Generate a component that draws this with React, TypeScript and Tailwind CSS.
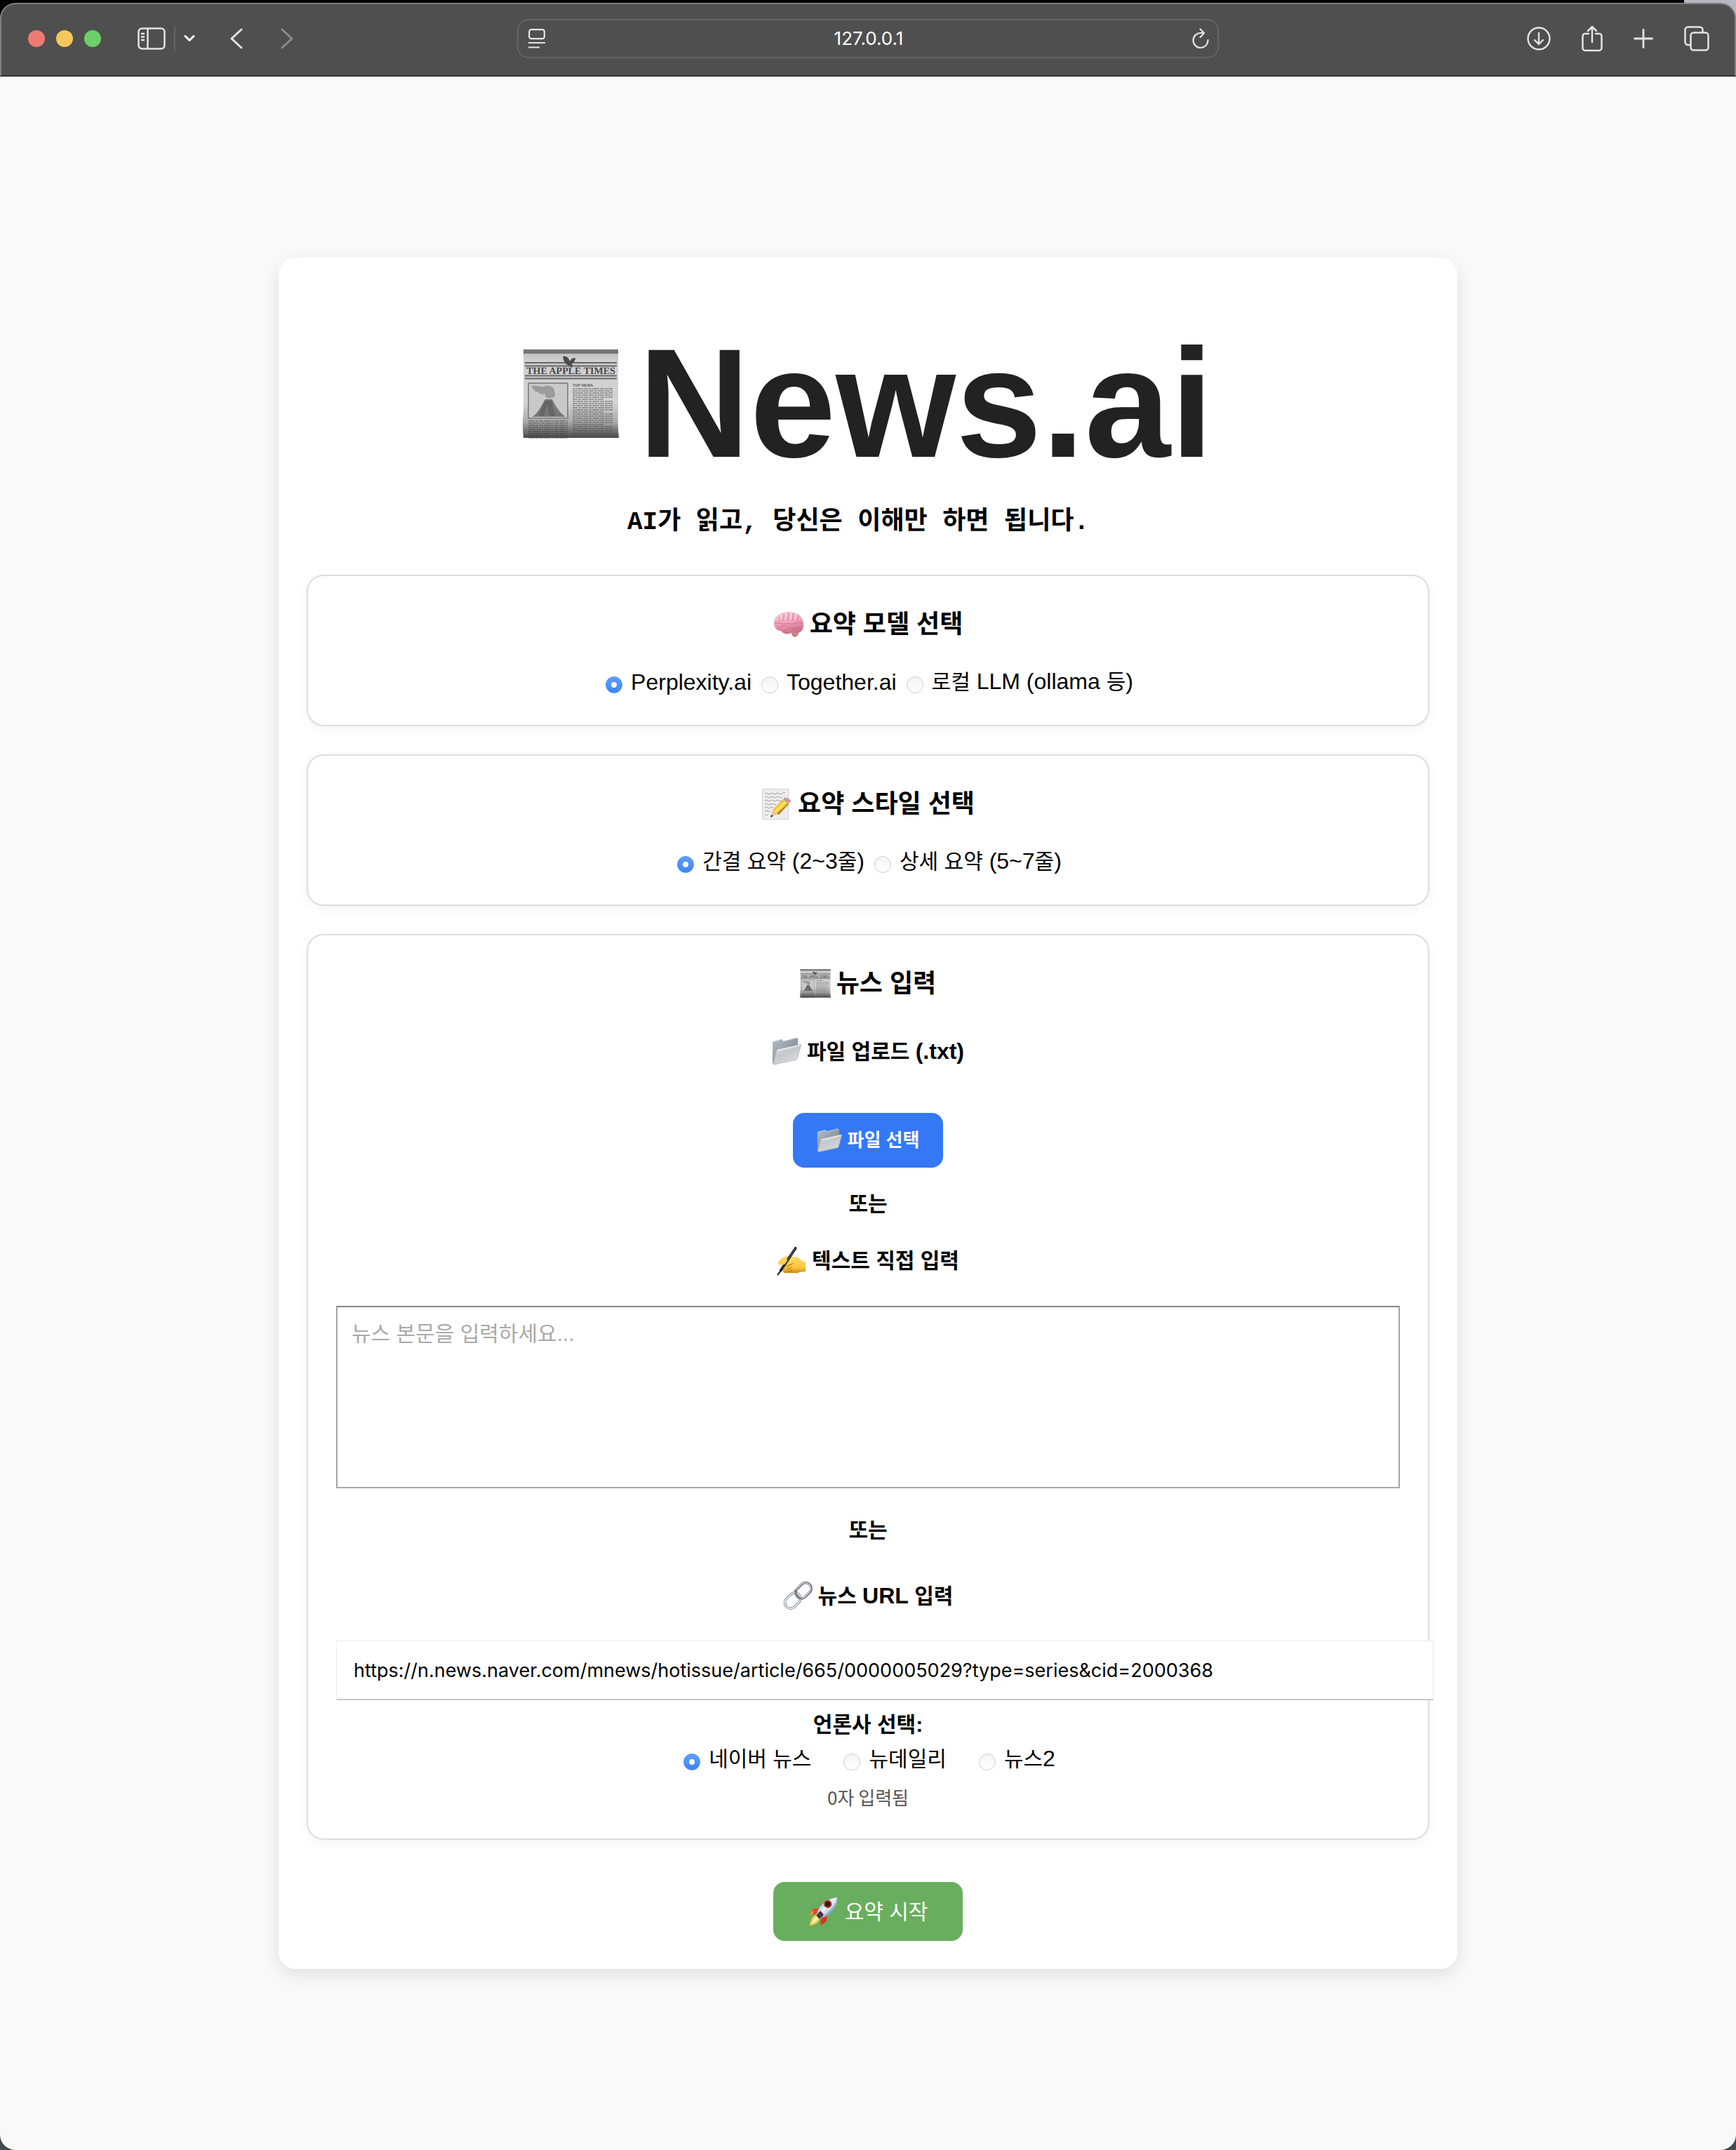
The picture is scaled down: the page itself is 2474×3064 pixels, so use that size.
import { useId, type ReactNode } from "react";

type ArtProps = { className: string };

function Newspaper({ className }: ArtProps) {
  const id = useId();
  const column = Array.from({ length: 23 }, (_, i) => i);
  return (
    <svg viewBox="0 0 137 128" className={className} aria-hidden="true">
      <defs>
        <linearGradient id={id} x1="0" y1="0" x2="0" y2="1">
          <stop offset="0" stopColor="#b8b8b8" />
          <stop offset="0.12" stopColor="#cfcfcf" />
          <stop offset="0.6" stopColor="#d4d4d4" />
          <stop offset="0.82" stopColor="#a9a9a9" />
          <stop offset="1" stopColor="#484848" />
        </linearGradient>
      </defs>
      <path d="M1 1h135v88q-1 20 1 38H1q-2-18 0-38z" fill={`url(#${id})`} />
      <path d="M1 1h135v6H1z" fill="#747474" />
      <path d="M3 20h131M3 24.500h131M3 38.500h131M3 42.500h131" stroke="#666" strokeWidth="2" />
      <path d="M57 11c5-1 8 1 10 7 2-4 5-6 9-4-2 1-2 3-3 5l-3 2 1 6-3-2-6-3c-4-4-4-8-5-11z" fill="#4a4a4a" />
      <text x="68.500" y="36" textAnchor="middle" fontSize="14" fontWeight="700" fill="#484848" fontFamily="Liberation Serif, serif" textRendering="geometricPrecision">
        THE APPLE TIMES
      </text>
      <rect x="8" y="49" width="56" height="50" fill="#c9c9c9" stroke="#777" strokeWidth="1.500" />
      <path d="M12 54c8-4 14 3 20-1 8-2 14 3 13 9 3 5-1 9-6 8-5 2-8-2-7-6-7 3-9-3-14-3z" fill="#9b9b9b" />
      <path d="M13 97c8-3 14-17 19-25h10c4 9 11 20 19 25z" fill="#777" />
      <path d="M31 74l-8 22h7l5-16 3 16h8l-5-22z" fill="#5c5c5c" opacity="0.600" />
      <text x="71" y="54" fontSize="5.500" fontWeight="700" fill="#555" fontFamily="Liberation Sans, sans-serif" textRendering="geometricPrecision">
        TOP NEWS
      </text>
      {column.map((i) => (
        <path key={i} d={`M71 ${57 + i * 3}h${i % 6 === 5 ? 44 : 57}`} stroke="#555" strokeWidth="1.300" strokeDasharray={i % 2 ? "7 1 4 1 9 1" : "4 1 10 1 6 1"} opacity="0.600" />
      ))}
      {column.slice(0, 9).map((i) => (
        <path key={i} d={`M8 ${103 + i * 3}h56`} stroke="#444" strokeWidth="1.300" strokeDasharray={i % 2 ? "5 1 8 1 3 1" : "9 1 4 1 6 1"} opacity="0.600" />
      ))}
    </svg>
  );
}

function Brain({ className }: ArtProps) {
  const id = useId();
  return (
    <svg viewBox="0 0 44 44" className={className} fill="none" aria-hidden="true">
      <defs>
        <linearGradient id={id} x1="0" y1="0" x2="0.300" y2="1">
          <stop offset="0" stopColor="#fbd3dd" />
          <stop offset="0.550" stopColor="#f0a3b8" />
          <stop offset="1" stopColor="#d0708e" />
        </linearGradient>
      </defs>
      <path d="M25 32c1 4 2 7 5 8 4 0 6-3 6-7l-3-4z" fill="#c98487" />
      <path d="M1 22C0 11 9 4 22 4c12 0 20 6 21 16 1 8-3 14-9 14-3 0-5-2-7-1-5 4-13 3-16-2-5 0-9-3-10-9z" fill={`url(#${id})`} />
      <path
        d="M8 11c3 2 1 6-1 9m7-13c3 3 0 6-1 10m8-12c3 3-1 7 0 11m7-10c2 3-2 6 0 10m7-7c2 3-2 4 0 8M2 20c6-1 8 2 14 1s10 1 14 0 8-3 12-1M10 29c0-5 3-6 7-5m-4 7c5 1 7-5 12-4s10 0 15-2m-13 6c-1-3 3-5 7-4M6 23c2 1 2 3 1 5"
        stroke="#c9688a"
        strokeWidth="1"
        strokeLinecap="round"
        opacity="0.800"
      />
      <path d="M11 8c2 2 0 5-1 7m8-9c2 3 0 6-1 9m8-9c2 3 0 6-1 9m8-7c1 2 0 5-1 7" stroke="#fff" strokeWidth="1.200" opacity="0.600" />
    </svg>
  );
}

function Memo({ className }: ArtProps) {
  return (
    <svg viewBox="0 0 44 44" className={className} fill="none" aria-hidden="true">
      <path d="M1.500 .5h37v43h-37z" fill="#ededed" stroke="#d2d2d2" />
      <path
        d="M5 7q2-2 4 0t4 0 4 0 4 0 4 0 4 0 5-1M5 12q2-2 4 0t4 0 4 0 4 0 4 0 5 0M5 17q2-2 4 0t4 0 4 0 4 0 4 0 4 0M5 22q2-2 4 0t4 0 4 0 4 0M5 27q2-2 4 0t4 0 4 0M5 32q2-2 4 0t4 0M5 38q2-2 4 0"
        stroke="#a0a0a0"
        strokeWidth="1"
      />
      <path d="M13 41l3-11 7 6z" fill="#e8c79a" />
      <path d="M13 41l1-4 3 2z" fill="#333" />
      <path d="M16 30L31 15l7 6-15 15z" fill="#f5c431" />
      <path d="M19 32L34 17l2 2-15 15z" fill="#fbe27a" />
      <path d="M22 36l16-15 1 1-14 15z" fill="#a97d12" />
      <path d="M31 15l2-2 7 6-2 2z" fill="#9aa3ad" />
      <path d="M33 13c3-1 8 2 9 4 0 2-1 3-2 3z" fill="#ef8d94" />
    </svg>
  );
}

function Folder({ className }: ArtProps) {
  const id = useId();
  return (
    <svg viewBox="0 0 44 42" className={className} fill="none" aria-hidden="true">
      <defs>
        <linearGradient id={`${id}b`} x1="0" y1="0" x2="1" y2="1">
          <stop offset="0" stopColor="#b6bec6" />
          <stop offset="1" stopColor="#6f7c88" />
        </linearGradient>
        <linearGradient id={`${id}f`} x1="0" y1="0" x2="0.600" y2="1">
          <stop offset="0" stopColor="#e3e5e8" />
          <stop offset="0.500" stopColor="#c4c7cb" />
          <stop offset="1" stopColor="#d9dbde" />
        </linearGradient>
      </defs>
      <path d="M1 7L15 3l2 3 20-5c1 0 2 1 2 2v26L3 41 1 39z" fill={`url(#${id}b)`} />
      <path d="M1 7L15 3l2 3 20-5" stroke="#d7dce1" />
      <path d="M7 20c0-1 1-2 2-2l33-7c1 0 2 0 1.500 1.500L38 32c0 1-1 2-2 2L4 41c-1 0-2-1-2-2z" fill={`url(#${id}f)`} stroke="#a6abb0" strokeWidth="0.700" />
      <path d="M8 20L42 12" stroke="#fff" strokeWidth="1" />
    </svg>
  );
}

function WritingHand({ className }: ArtProps) {
  const id = useId();
  return (
    <svg viewBox="0 0 44 44" className={className} fill="none" aria-hidden="true">
      <defs>
        <linearGradient id={id} x1="0" y1="0" x2="0" y2="1">
          <stop offset="0" stopColor="#ffdf6b" />
          <stop offset="0.700" stopColor="#fbc53b" />
          <stop offset="1" stopColor="#c98a17" />
        </linearGradient>
      </defs>
      <path d="M3 22c3-4 7-6 11-7 3-2 6-1 6 1l9 0c3 0 6 3 9 6l5 2v14c-5 0-8 0-12 2H13c-4 0-5-4-3-6-4-1-4-5 0-7L4 28c-2-1-3-4-1-6z" fill={`url(#${id})`} />
      <path d="M15 30l9-4m-9 8l7-2m-5 6l6-2M20 17l-8 8" stroke="#b9770f" strokeWidth="1.200" strokeLinecap="round" />
      <path d="M28 3L6 36" stroke="#2b2b2b" strokeWidth="4" strokeLinecap="round" />
      <path d="M8 34l-7 9" stroke="#111" strokeWidth="2" />
      <path d="M28 3L12 27" stroke="#777" strokeWidth="0.800" />
      <path d="M6 23c2-3 6-5 9-4 2 2-1 5-5 9" fill="#fdd154" />
    </svg>
  );
}

function Chain({ className }: ArtProps) {
  return (
    <svg viewBox="0 0 44 44" className={className} fill="none" aria-hidden="true">
      <g transform="rotate(-45 30 14)">
        <rect x="17" y="6" width="26" height="17" rx="8.500" stroke="#6f6a70" strokeWidth="3.800" />
        <rect x="16.500" y="5.500" width="26" height="17" rx="8.500" stroke="#cfd9e6" strokeWidth="1.600" />
      </g>
      <g transform="rotate(-45 14 29)">
        <rect x="1" y="21" width="26" height="17" rx="8.500" stroke="#7d8794" strokeWidth="3.800" />
        <rect x="1" y="21" width="26" height="17" rx="8.500" stroke="#f0f4f9" strokeWidth="1.800" />
      </g>
      <path d="M18 13c0 5 2 10 9 14" stroke="#77717a" strokeWidth="2.600" />
    </svg>
  );
}

function Rocket({ className }: ArtProps) {
  const id = useId();
  return (
    <svg viewBox="0 0 44 44" className={className} fill="none" aria-hidden="true">
      <defs>
        <linearGradient id={id} x1="0.200" y1="0.200" x2="0.800" y2="0.800">
          <stop offset="0" stopColor="#8fb4e6" />
          <stop offset="0.450" stopColor="#eef2f5" />
          <stop offset="1" stopColor="#4c78b8" />
        </linearGradient>
      </defs>
      <path d="M17 17L7 18 1 27l11-1z" fill="#e8452c" />
      <path d="M7 20l-6 7 6-1z" fill="#f9a13a" />
      <path d="M28 28l-1 9-9 6 1-12z" fill="#d9331f" />
      <path d="M11 27c-6 3-8 9-9 16 7-1 12-3 15-9z" fill="#f5d24f" />
      <path d="M12 30c-4 2-5 6-7 10 4-1 7-3 9-7z" fill="#fff3b0" />
      <path d="M12 28c2-12 13-25 31-27 0 17-11 28-26 32z" fill={`url(#${id})`} />
      <path d="M12 28l5 5 6-6-5-6z" fill="#5a2027" />
      <path d="M14 24l7 7" stroke="#39567f" strokeWidth="2" />
      <circle cx="29" cy="11" r="5" fill="#222" stroke="#c9342c" strokeWidth="2" />
      <path d="M22 26c8-4 14-11 18-20" stroke="#fff" strokeWidth="1.500" opacity="0.600" />
    </svg>
  );
}

function Ko({ children }: { children: ReactNode }) {
  return <span className="text-[30px]">{children}</span>;
}

function Latin({ children }: { children: ReactNode }) {
  return <span className="text-[32px]">{children}</span>;
}

function Radio({ name, children, defaultChecked }: { name: string; children: ReactNode; defaultChecked?: boolean }) {
  return (
    <label className="flex items-center gap-3 whitespace-nowrap text-[32px] leading-10">
      <input
        type="radio"
        name={name}
        defaultChecked={defaultChecked}
        className="mt-2 flex size-6 shrink-0 appearance-none items-center justify-center rounded-full border border-[#cfcfcf] bg-linear-to-b from-[#f4f4f4] to-white before:size-2 before:rounded-full checked:border-[#4a90f8] checked:from-[#5e9ffb] checked:to-[#3c85f7] checked:before:bg-white"
      />
      <span>{children}</span>
    </label>
  );
}

function Section({ icon, title, children }: { icon: ReactNode; title: string; children: ReactNode }) {
  return (
    <section className="flex w-full flex-col items-center rounded-[24px] border-2 border-[#ddd] px-10 pt-[47px] pb-[41px] shadow-[0_4px_16px_rgba(0,0,0,0.05)]">
      <h2 className="flex items-center gap-2 text-[36px] leading-[44px] font-bold">
        {icon}
        {title}
      </h2>
      {children}
    </section>
  );
}

const toolButton = "flex items-center justify-center text-[#e4e4e4]";

function Toolbar() {
  return (
    <header className="bg-[linear-gradient(to_right,#000_97%,#b5b8c0_97%)] pt-1">
      <div className="grid h-[104px] grid-cols-[1fr_minmax(0,1000px)_1fr] items-center rounded-t-[22px] border-x-2 border-t-2 border-[#808080] bg-[#4f4f4f] pb-1">
        <div className="flex items-center pl-[38px]">
          <div className="flex gap-4">
            <button aria-label="Close" className="size-6 rounded-full bg-[#ee7b72]" />
            <button aria-label="Minimize" className="size-6 rounded-full bg-[#f5c75d]" />
            <button aria-label="Zoom" className="size-6 rounded-full bg-[#6dcf68]" />
          </div>
          <button aria-label="Sidebar" className={`${toolButton} ml-[52px]`}>
            <svg viewBox="0 0 40 32" className="h-8 w-10" fill="none" stroke="currentColor" strokeWidth="2.500">
              <rect x="1.500" y="1.500" width="37" height="29" rx="5" />
              <path d="M14.500 2v28M5 9h5M5 13.500h5M5 18h5" />
            </svg>
          </button>
          <div className="ml-3 h-9 w-0.5 bg-[#646464]" />
          <button aria-label="Sidebar menu" className="ml-3 flex text-white">
            <svg viewBox="0 0 16 12" className="h-3 w-4" fill="none" stroke="currentColor" strokeWidth="3" strokeLinecap="round" strokeLinejoin="round">
              <path d="M2 2.500l6 6 6-6" />
            </svg>
          </button>
          <button aria-label="Back" className={`${toolButton} ml-[50px]`}>
            <svg viewBox="0 0 18 30" className="h-[30px] w-[18px]" fill="none" stroke="currentColor" strokeWidth="3" strokeLinecap="round" strokeLinejoin="round">
              <path d="M16 2L2 15l14 13" />
            </svg>
          </button>
          <button aria-label="Forward" className="ml-[54px] flex text-[#8c8c8c]">
            <svg viewBox="0 0 18 30" className="h-[30px] w-[18px]" fill="none" stroke="currentColor" strokeWidth="3" strokeLinecap="round" strokeLinejoin="round">
              <path d="M2 2l14 13L2 28" />
            </svg>
          </button>
        </div>
        <div className="flex h-14 items-center rounded-[16px] border-2 border-[#646464] pr-3 pl-3.5">
          <button aria-label="Reader" className={toolButton}>
            <svg viewBox="0 0 24 28" className="h-7 w-6" fill="none" stroke="currentColor" strokeWidth="2.200">
              <rect x="1.200" y="1.200" width="21.600" height="13" rx="3" />
              <path d="M0 20h24M0 26.500h16" />
            </svg>
          </button>
          <input
            aria-label="Address"
            defaultValue="127.0.0.1"
            className="min-w-0 flex-1 bg-transparent text-center font-['Inter','Noto_Sans_CJK_KR',sans-serif] text-[26px] leading-8 text-white outline-none"
          />
          <button aria-label="Reload" className={toolButton}>
            <svg viewBox="0 0 24 30" className="h-[30px] w-6" fill="none" stroke="currentColor" strokeWidth="2.200" strokeLinecap="round" strokeLinejoin="round">
              <path d="M22.500 17A10.500 10.500 0 1 1 12 7h5M11.500 1.500L17 7l-5.500 6" />
            </svg>
          </button>
        </div>
        <div className="flex items-center justify-end gap-11 pr-9">
          <button aria-label="Downloads" className={toolButton}>
            <svg viewBox="0 0 34 34" className="size-[34px]" fill="none" stroke="currentColor" strokeWidth="2.400" strokeLinecap="round" strokeLinejoin="round">
              <circle cx="17" cy="17" r="15.500" />
              <path d="M17 9v16M11 19l6 6 6-6" />
            </svg>
          </button>
          <button aria-label="Share" className={toolButton}>
            <svg viewBox="0 0 30 38" className="h-[38px] w-[30px]" fill="none" stroke="currentColor" strokeWidth="2.500" strokeLinecap="round" strokeLinejoin="round">
              <path d="M10 12H5a3.500 3.500 0 0 0-3.500 3.500v17A3.500 3.500 0 0 0 5 36h20a3.500 3.500 0 0 0 3.500-3.500v-17A3.500 3.500 0 0 0 25 12h-5M15 24V2M9 8l6-6 6 6" />
            </svg>
          </button>
          <button aria-label="New tab" className={toolButton}>
            <svg viewBox="0 0 28 28" className="size-7" fill="none" stroke="currentColor" strokeWidth="2.800" strokeLinecap="round">
              <path d="M14 1.500v25M1.500 14h25" />
            </svg>
          </button>
          <button aria-label="Tab overview" className={toolButton}>
            <svg viewBox="0 0 36 36" className="size-9" fill="none" stroke="currentColor" strokeWidth="2.500" strokeLinejoin="round">
              <rect x="9.500" y="9.500" width="25" height="25" rx="4" />
              <path d="M9.500 27H5.500a4 4 0 0 1-4-4V5.500a4 4 0 0 1 4-4h17a4 4 0 0 1 4 4v4" />
            </svg>
          </button>
        </div>
      </div>
    </header>
  );
}

export default function App() {
  return (
    <div className="flex min-h-screen flex-col bg-[#3f4b52] font-['Liberation_Sans','Noto_Sans_CJK_KR',sans-serif] text-black">
      <Toolbar />
      <main className="flex flex-1 items-center justify-center rounded-b-[22px] border-t border-black bg-[#f9f9f9] px-6 py-20">
        <div className="flex w-full max-w-[1680px] flex-col items-center rounded-[24px] bg-white px-10 pt-[98px] pb-10 shadow-[0_8px_24px_rgba(0,0,0,0.1)]">
          <h1 className="flex items-start gap-7 text-[220px] leading-[220px] font-bold text-[#222]">
            <Newspaper className="mt-8 w-[137px]" />
            News.ai
          </h1>
          <p className="mt-[38px] pr-7 font-['Liberation_Mono','Noto_Sans_CJK_KR',monospace] text-[36px] leading-[44px] font-bold">
            AI가 읽고, 당신은 이해만 하면 됩니다.
          </p>

          <div className="mt-[52px] flex w-full flex-col gap-10">
            <Section icon={<Brain className="size-11" />} title="요약 모델 선택">
              <div className="mt-[39px] flex gap-3.5 pl-1">
                <Radio name="model" defaultChecked>
                  Perplexity.ai
                </Radio>
                <Radio name="model">Together.ai</Radio>
                <Radio name="model">
                  <Ko>로컬</Ko> LLM (ollama <Ko>등</Ko>)
                </Radio>
              </div>
            </Section>

            <Section icon={<Memo className="size-11" />} title="요약 스타일 선택">
              <div className="mt-[39px] flex gap-3.5 pl-1">
                <Radio name="style" defaultChecked>
                  <Ko>간결 요약</Ko> (2~3<Ko>줄</Ko>)
                </Radio>
                <Radio name="style">
                  <Ko>상세 요약</Ko> (5~7<Ko>줄</Ko>)
                </Radio>
              </div>
            </Section>

            <Section icon={<Newspaper className="w-11" />} title="뉴스 입력">
              <h3 className="mt-[54px] flex items-center gap-2 text-[30px] leading-10 font-bold">
                <Folder className="w-[42px]" />
                <span>
                  파일 업로드 <Latin>(.txt)</Latin>
                </span>
              </h3>
              <button className="mt-[67px] flex h-[78px] items-center gap-2 rounded-[16px] bg-[#3478f6] px-[34px] text-[26px] font-bold text-white">
                <Folder className="w-9" />
                파일 선택
              </button>
              <p className="mt-8 text-[30px] leading-10 font-bold">또는</p>
              <h3 className="mt-10 flex items-center gap-2 text-[30px] leading-10 font-bold">
                <WritingHand className="size-[42px]" />
                <label htmlFor="article">텍스트 직접 입력</label>
              </h3>
              <textarea
                id="article"
                placeholder="뉴스 본문을 입력하세요..."
                className="mt-[43px] h-[260px] w-full resize-none border-2 border-[#a6a6a6] border-t-[#858585] bg-white px-5 py-4 text-[30px] leading-[44px] outline-none placeholder:text-[#a9a9a9]"
              />
              <p className="mt-10 text-[30px] leading-10 font-bold">또는</p>
              <h3 className="mt-[52px] flex items-center gap-2 text-[30px] leading-10 font-bold">
                <Chain className="size-[42px]" />
                <label htmlFor="url">
                  뉴스 <Latin>URL</Latin> 입력
                </label>
              </h3>
              <div className="mt-[43px] -mr-12 self-stretch">
                <input
                  id="url"
                  type="text"
                  defaultValue="https://n.news.naver.com/mnews/hotissue/article/665/0000005029?type=series&cid=2000368"
                  className="h-[85px] w-full border border-b-2 border-[#ececec] border-b-[#c8c8c8] bg-white px-6 font-['Inter','Noto_Sans_CJK_KR',sans-serif] text-[27px] outline-none"
                />
              </div>
              <p className="mt-[15px] text-[30px] leading-10 font-bold">언론사 선택:</p>
              <div className="mt-2 flex gap-[46px] pl-1">
                <Radio name="press" defaultChecked>
                  <Ko>네이버 뉴스</Ko>
                </Radio>
                <Radio name="press">
                  <Ko>뉴데일리</Ko>
                </Radio>
                <Radio name="press">
                  <Ko>뉴스</Ko>2
                </Radio>
              </div>
              <p className="mt-4 font-['Noto_Sans_CJK_KR',sans-serif] text-[26px] leading-9 text-[#555]">0자 입력됨</p>
            </Section>
          </div>

          <button className="mt-[60px] flex h-[84px] items-center gap-2.5 rounded-[16px] bg-[#69ae5e] px-[50px] text-[30px] text-white">
            <Rocket className="size-[42px]" />
            요약 시작
          </button>
        </div>
      </main>
    </div>
  );
}
